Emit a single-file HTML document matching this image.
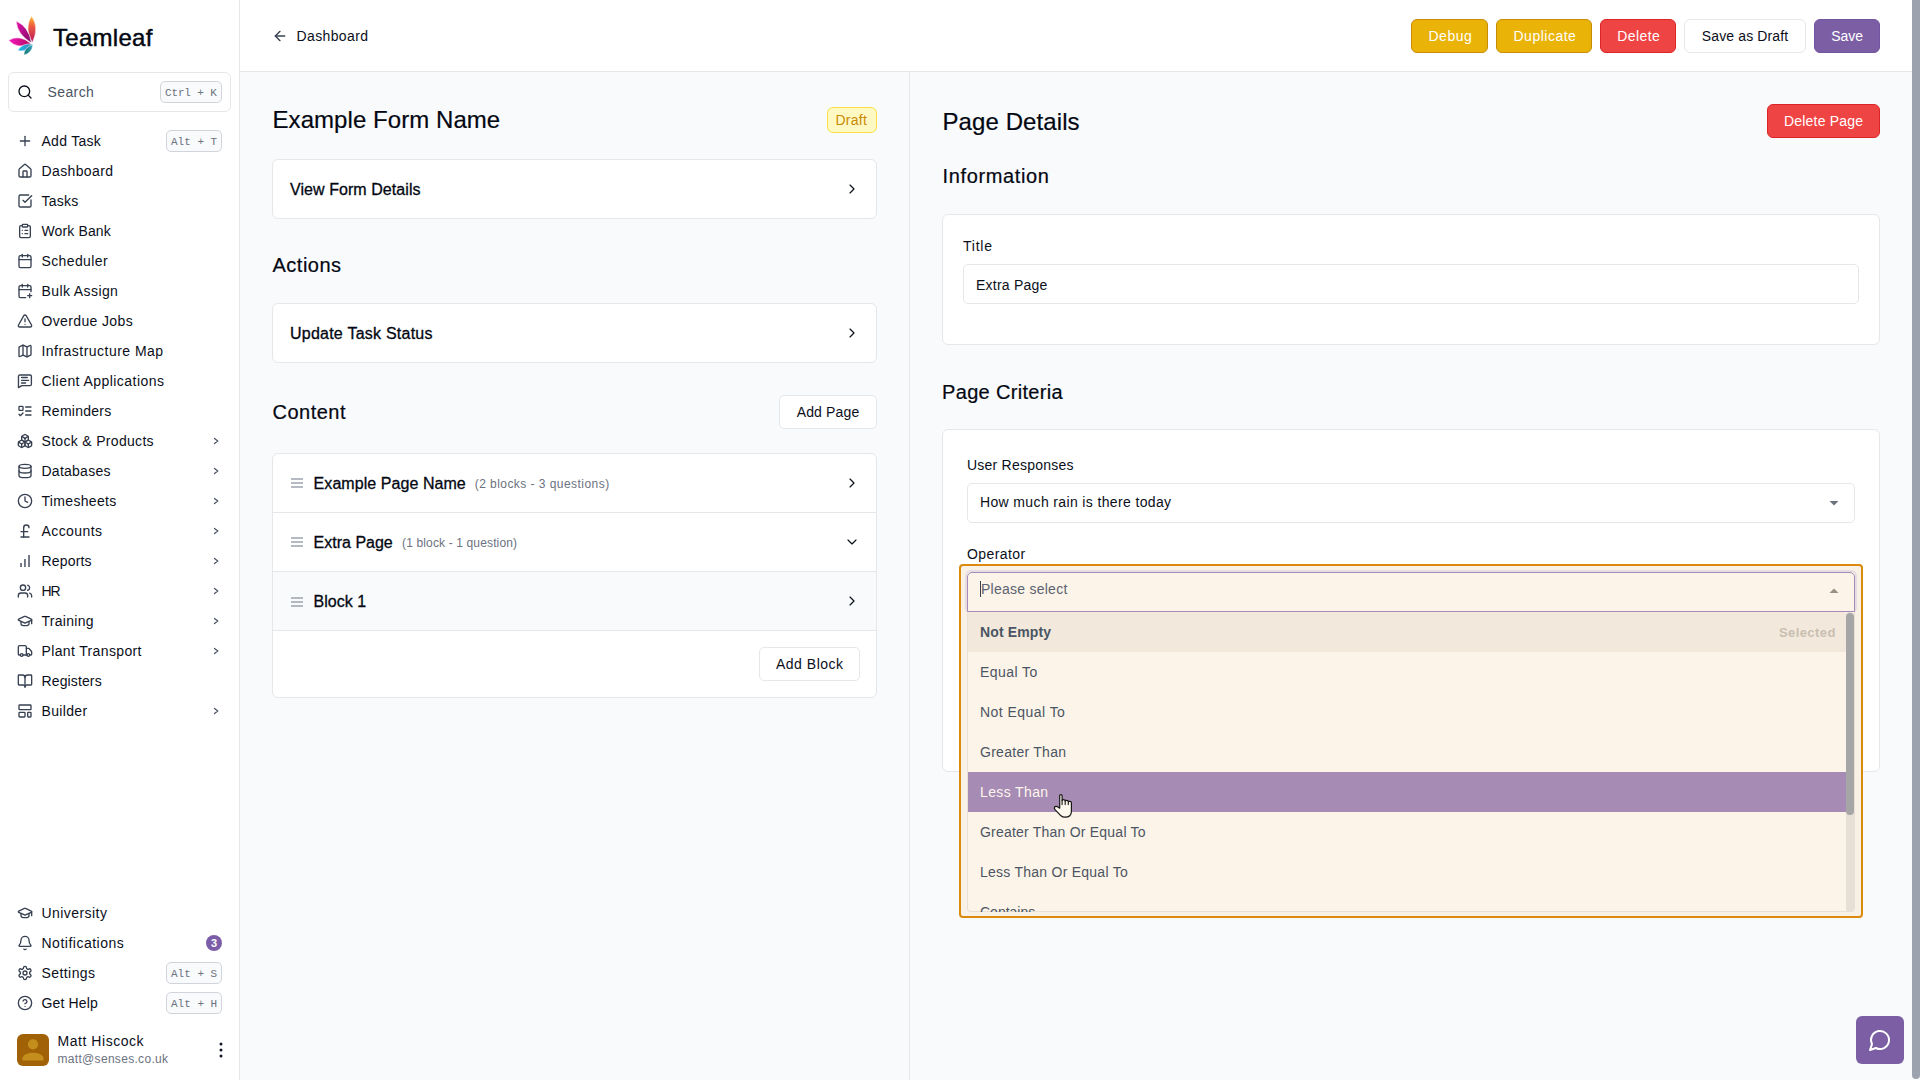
<!DOCTYPE html>
<html><head><meta charset="utf-8"><title>Teamleaf</title>
<style>
html,body{margin:0;padding:0;width:1920px;height:1080px;overflow:hidden;background:#f9fafb;}
body{position:relative;font-family:'Liberation Sans', sans-serif;-webkit-font-smoothing:antialiased;}
.t{position:absolute;white-space:nowrap;}
.b{position:absolute;}
.i{position:absolute;overflow:visible;}
</style></head><body>
<div class="b" style="left:0px;top:0px;width:1920px;height:1080px;background:#f9fafb;border-radius:0px;box-sizing:border-box;"></div>
<div class="b" style="left:0px;top:0px;width:240px;height:1080px;background:#ffffff;border-radius:0px;box-sizing:border-box;border-right:1px solid #e5e7eb;"></div>
<svg class="i" style="left:0px;top:0px" width="48" height="60" viewBox="0 0 48 60">
<defs>
<linearGradient id="g1" x1="0" y1="0" x2="0" y2="1"><stop offset="0" stop-color="#fcc02a"/><stop offset="0.35" stop-color="#f0603e"/><stop offset="1" stop-color="#b8125e"/></linearGradient>
<linearGradient id="g2" x1="0" y1="0" x2="1" y2="1"><stop offset="0" stop-color="#e512a8"/><stop offset="1" stop-color="#7c0c66"/></linearGradient>
<linearGradient id="g3" x1="0" y1="0" x2="1" y2="0"><stop offset="0" stop-color="#f516c0"/><stop offset="1" stop-color="#b30c5c"/></linearGradient>
<linearGradient id="g4" x1="0" y1="0" x2="1" y2="0"><stop offset="0" stop-color="#1cc0ec"/><stop offset="1" stop-color="#3b86b8"/></linearGradient>
<linearGradient id="g5" x1="0" y1="1" x2="1" y2="0"><stop offset="0" stop-color="#0e7470"/><stop offset="1" stop-color="#3aa6c4"/></linearGradient>
</defs>
<path d="M32.30 42.50Q39.66 27.69 31.50 16.00Q24.06 28.16 32.30 42.50Z" fill="url(#g1)" stroke="#fff" stroke-width="0.5"/>
<path d="M31.50 42.80Q28.81 26.79 16.20 21.00Q17.36 34.83 31.50 42.80Z" fill="url(#g2)" stroke="#fff" stroke-width="0.5"/>
<path d="M31.00 43.80Q19.95 33.92 8.60 40.20Q17.41 49.72 31.00 43.80Z" fill="url(#g3)" stroke="#fff" stroke-width="0.5"/>
<path d="M32.60 44.20Q22.30 42.44 17.80 50.40Q26.62 52.78 32.60 44.20Z" fill="url(#g4)" stroke="#fff" stroke-width="0.5"/>
<path d="M33.00 44.60Q24.21 46.93 23.80 54.90Q31.67 53.60 33.00 44.60Z" fill="url(#g5)" stroke="#fff" stroke-width="0.5"/>
</svg>
<div id="t1" class="t" style="left:53px;top:25.68px;font-size:24px;line-height:24px;color:#030712;font-weight:400;font-family:'Liberation Sans', sans-serif;letter-spacing:0.286px;-webkit-text-stroke:0.45px #030712;">Teamleaf</div>
<div class="b" style="left:8px;top:72px;width:223px;height:40px;background:#ffffff;border-radius:6px;box-sizing:border-box;border:1px solid #e5e7eb;"></div>
<svg class="i" style="left:17px;top:83.5px;" width="16" height="16" viewBox="0 0 24 24" fill="none" stroke="#0b0f1a" stroke-width="2" stroke-linecap="round" stroke-linejoin="round"><circle cx="11" cy="11" r="8"/><path d="m21 21-4.3-4.3"/></svg>
<div id="t2" class="t" style="left:47.5px;top:85.15px;font-size:14px;line-height:14px;color:#4b5563;font-weight:400;font-family:'Liberation Sans', sans-serif;letter-spacing:0.400px;">Search</div>
<div class="b" style="left:160px;top:81px;width:62px;height:22px;background:#f9fafb;border-radius:5px;box-sizing:border-box;border:1px solid #d1d5db;"></div>
<div id="t3" class="t" style="left:165px;top:87.57px;font-size:11px;line-height:11px;color:#6b7280;font-weight:400;font-family:'Liberation Mono', monospace;letter-spacing:-0.143px;">Ctrl + K</div>
<svg class="i" style="left:17px;top:133px;" width="16" height="16" viewBox="0 0 24 24" fill="none" stroke="#374151" stroke-width="2" stroke-linecap="round" stroke-linejoin="round"><path d="M5 12h14"/><path d="M12 5v14"/></svg>
<div id="t4" class="t" style="left:41.5px;top:134.15px;font-size:14px;line-height:14px;color:#0b0f1a;font-weight:400;font-family:'Liberation Sans', sans-serif;letter-spacing:0.286px;">Add Task</div>
<div class="b" style="left:166px;top:130px;width:56px;height:22px;background:#f9fafb;border-radius:5px;box-sizing:border-box;border:1px solid #d1d5db;"></div>
<div id="t5" class="t" style="left:171px;top:136.57px;font-size:11px;line-height:11px;color:#6b7280;font-weight:400;font-family:'Liberation Mono', monospace;">Alt + T</div>
<svg class="i" style="left:17px;top:163px;" width="16" height="16" viewBox="0 0 24 24" fill="none" stroke="#374151" stroke-width="2" stroke-linecap="round" stroke-linejoin="round"><path d="M15 21v-8a1 1 0 0 0-1-1h-4a1 1 0 0 0-1 1v8"/><path d="M3 10a2 2 0 0 1 .709-1.528l7-5.999a2 2 0 0 1 2.582 0l7 5.999A2 2 0 0 1 21 10v9a2 2 0 0 1-2 2H5a2 2 0 0 1-2-2z"/></svg>
<div id="t6" class="t" style="left:41.5px;top:164.15px;font-size:14px;line-height:14px;color:#0b0f1a;font-weight:400;font-family:'Liberation Sans', sans-serif;letter-spacing:0.374px;">Dashboard</div>
<svg class="i" style="left:17px;top:193px;" width="16" height="16" viewBox="0 0 24 24" fill="none" stroke="#374151" stroke-width="2" stroke-linecap="round" stroke-linejoin="round"><path d="M21 10.5V19a2 2 0 0 1-2 2H5a2 2 0 0 1-2-2V5a2 2 0 0 1 2-2h12.5"/><path d="m9 11 3 3L22 4"/></svg>
<div id="t7" class="t" style="left:41.5px;top:194.15px;font-size:14px;line-height:14px;color:#0b0f1a;font-weight:400;font-family:'Liberation Sans', sans-serif;letter-spacing:0.250px;">Tasks</div>
<svg class="i" style="left:17px;top:223px;" width="16" height="16" viewBox="0 0 24 24" fill="none" stroke="#374151" stroke-width="2" stroke-linecap="round" stroke-linejoin="round"><rect width="8" height="4" x="8" y="2" rx="1" ry="1"/><path d="M16 4h2a2 2 0 0 1 2 2v14a2 2 0 0 1-2 2H6a2 2 0 0 1-2-2V6a2 2 0 0 1 2-2h2"/><path d="M12 11h4"/><path d="M12 16h4"/><path d="M8 11h.01"/><path d="M8 16h.01"/></svg>
<div id="t8" class="t" style="left:41.5px;top:224.15px;font-size:14px;line-height:14px;color:#0b0f1a;font-weight:400;font-family:'Liberation Sans', sans-serif;letter-spacing:0.126px;">Work Bank</div>
<svg class="i" style="left:17px;top:253px;" width="16" height="16" viewBox="0 0 24 24" fill="none" stroke="#374151" stroke-width="2" stroke-linecap="round" stroke-linejoin="round"><rect width="18" height="18" x="3" y="4" rx="2"/><path d="M16 2v4"/><path d="M8 2v4"/><path d="M3 10h18"/></svg>
<div id="t9" class="t" style="left:41.5px;top:254.15px;font-size:14px;line-height:14px;color:#0b0f1a;font-weight:400;font-family:'Liberation Sans', sans-serif;letter-spacing:0.375px;">Scheduler</div>
<svg class="i" style="left:17px;top:283px;" width="16" height="16" viewBox="0 0 24 24" fill="none" stroke="#374151" stroke-width="2" stroke-linecap="round" stroke-linejoin="round"><path d="M8 2v4"/><path d="M16 2v4"/><path d="M21 13V6a2 2 0 0 0-2-2H5a2 2 0 0 0-2 2v14a2 2 0 0 0 2 2h8"/><path d="M3 10h18"/><path d="M16 19h6"/><path d="M19 16v6"/></svg>
<div id="t10" class="t" style="left:41.5px;top:284.15px;font-size:14px;line-height:14px;color:#0b0f1a;font-weight:400;font-family:'Liberation Sans', sans-serif;letter-spacing:0.400px;">Bulk Assign</div>
<svg class="i" style="left:17px;top:313px;" width="16" height="16" viewBox="0 0 24 24" fill="none" stroke="#374151" stroke-width="2" stroke-linecap="round" stroke-linejoin="round"><path d="m21.73 18-8-14a2 2 0 0 0-3.48 0l-8 14A2 2 0 0 0 4 21h16a2 2 0 0 0 1.73-3"/><path d="M12 9v4"/><path d="M12 17h.01"/></svg>
<div id="t11" class="t" style="left:41.5px;top:314.15px;font-size:14px;line-height:14px;color:#0b0f1a;font-weight:400;font-family:'Liberation Sans', sans-serif;letter-spacing:0.364px;">Overdue Jobs</div>
<svg class="i" style="left:17px;top:343px;" width="16" height="16" viewBox="0 0 24 24" fill="none" stroke="#374151" stroke-width="2" stroke-linecap="round" stroke-linejoin="round"><path d="M14.106 5.553a2 2 0 0 0 1.788 0l3.659-1.83A1 1 0 0 1 21 4.619v12.764a1 1 0 0 1-.553.894l-4.553 2.277a2 2 0 0 1-1.788 0l-4.212-2.106a2 2 0 0 0-1.788 0l-3.659 1.83A1 1 0 0 1 3 19.381V6.618a1 1 0 0 1 .553-.894l4.553-2.277a2 2 0 0 1 1.788 0z"/><path d="M15 5.764v15"/><path d="M9 3.236v15"/></svg>
<div id="t12" class="t" style="left:41.5px;top:344.15px;font-size:14px;line-height:14px;color:#0b0f1a;font-weight:400;font-family:'Liberation Sans', sans-serif;letter-spacing:0.471px;">Infrastructure Map</div>
<svg class="i" style="left:17px;top:373px;" width="16" height="16" viewBox="0 0 24 24" fill="none" stroke="#374151" stroke-width="2" stroke-linecap="round" stroke-linejoin="round"><path d="M21.6 17a2 2 0 0 1-2 2H7.2l-5 3V5a2 2 0 0 1 2-2h15.4a2 2 0 0 1 2 2z"/><path d="M6.8 6.8h8.6"/><path d="M6.8 11h10.6"/><path d="M6.8 15h6"/></svg>
<div id="t13" class="t" style="left:41.5px;top:374.15px;font-size:14px;line-height:14px;color:#0b0f1a;font-weight:400;font-family:'Liberation Sans', sans-serif;letter-spacing:0.444px;">Client Applications</div>
<svg class="i" style="left:17px;top:403px;" width="16" height="16" viewBox="0 0 24 24" fill="none" stroke="#374151" stroke-width="2" stroke-linecap="round" stroke-linejoin="round"><rect x="3" y="5" width="6" height="6" rx="1"/><path d="m3 17 2 2 4-4"/><path d="M13 6h8"/><path d="M13 12h8"/><path d="M13 18h8"/></svg>
<div id="t14" class="t" style="left:41.5px;top:404.15px;font-size:14px;line-height:14px;color:#0b0f1a;font-weight:400;font-family:'Liberation Sans', sans-serif;letter-spacing:0.250px;">Reminders</div>
<svg class="i" style="left:17px;top:433px;" width="16" height="16" viewBox="0 0 24 24" fill="none" stroke="#374151" stroke-width="2" stroke-linecap="round" stroke-linejoin="round"><path d="M2.97 12.92A2 2 0 0 0 2 14.63v3.24a2 2 0 0 0 .97 1.71l3 1.8a2 2 0 0 0 2.06 0L12 19v-5.5l-5-3-4.03 2.42Z"/><path d="m7 16.5-4.74-2.85"/><path d="m7 16.5 5-3"/><path d="M7 16.5v5.17"/><path d="M12 13.5V19l3.97 2.38a2 2 0 0 0 2.06 0l3-1.8a2 2 0 0 0 .97-1.71v-3.24a2 2 0 0 0-.97-1.71L17 10.5l-5 3Z"/><path d="m17 16.5-5-3"/><path d="m17 16.5 4.74-2.85"/><path d="M17 16.5v5.17"/><path d="M7.97 4.42A2 2 0 0 0 7 6.13v4.37l5 3 5-3V6.13a2 2 0 0 0-.97-1.71l-3-1.8a2 2 0 0 0-2.06 0l-3 1.8Z"/><path d="M12 8 7.26 5.15"/><path d="m12 8 4.74-2.85"/><path d="M12 13.5V8"/></svg>
<div id="t15" class="t" style="left:41.5px;top:434.15px;font-size:14px;line-height:14px;color:#0b0f1a;font-weight:400;font-family:'Liberation Sans', sans-serif;letter-spacing:0.315px;">Stock &amp; Products</div>
<svg class="i" style="left:210px;top:435px" width="12" height="12" viewBox="0 0 12 12"><path d="M4.5 3.4L7.8 6L4.5 8.6" fill="none" stroke="#4b5563" stroke-width="1.3" stroke-linecap="round" stroke-linejoin="round"/></svg>
<svg class="i" style="left:17px;top:463px;" width="16" height="16" viewBox="0 0 24 24" fill="none" stroke="#374151" stroke-width="2" stroke-linecap="round" stroke-linejoin="round"><ellipse cx="12" cy="5" rx="9" ry="3"/><path d="M3 5V19A9 3 0 0 0 21 19V5"/><path d="M3 12A9 3 0 0 0 21 12"/></svg>
<div id="t16" class="t" style="left:41.5px;top:464.15px;font-size:14px;line-height:14px;color:#0b0f1a;font-weight:400;font-family:'Liberation Sans', sans-serif;letter-spacing:0.250px;">Databases</div>
<svg class="i" style="left:210px;top:465px" width="12" height="12" viewBox="0 0 12 12"><path d="M4.5 3.4L7.8 6L4.5 8.6" fill="none" stroke="#4b5563" stroke-width="1.3" stroke-linecap="round" stroke-linejoin="round"/></svg>
<svg class="i" style="left:17px;top:493px;" width="16" height="16" viewBox="0 0 24 24" fill="none" stroke="#374151" stroke-width="2" stroke-linecap="round" stroke-linejoin="round"><circle cx="12" cy="12" r="10"/><polyline points="12 6 12 12 16 14"/></svg>
<div id="t17" class="t" style="left:41.5px;top:494.15px;font-size:14px;line-height:14px;color:#0b0f1a;font-weight:400;font-family:'Liberation Sans', sans-serif;letter-spacing:0.333px;">Timesheets</div>
<svg class="i" style="left:210px;top:495px" width="12" height="12" viewBox="0 0 12 12"><path d="M4.5 3.4L7.8 6L4.5 8.6" fill="none" stroke="#4b5563" stroke-width="1.3" stroke-linecap="round" stroke-linejoin="round"/></svg>
<svg class="i" style="left:17px;top:523px;" width="16" height="16" viewBox="0 0 24 24" fill="none" stroke="#374151" stroke-width="2" stroke-linecap="round" stroke-linejoin="round"><path d="M18 7c0-5.333-8-5.333-8 0"/><path d="M10 7v14"/><path d="M6 21h12"/><path d="M6 13h10"/></svg>
<div id="t18" class="t" style="left:41.5px;top:524.15px;font-size:14px;line-height:14px;color:#0b0f1a;font-weight:400;font-family:'Liberation Sans', sans-serif;letter-spacing:0.429px;">Accounts</div>
<svg class="i" style="left:210px;top:525px" width="12" height="12" viewBox="0 0 12 12"><path d="M4.5 3.4L7.8 6L4.5 8.6" fill="none" stroke="#4b5563" stroke-width="1.3" stroke-linecap="round" stroke-linejoin="round"/></svg>
<svg class="i" style="left:17px;top:553px" width="16" height="16" viewBox="0 0 16 16"><rect x="3.1" y="10" width="1.85" height="4" fill="#6b7280"/><rect x="7" y="6" width="1.85" height="8" fill="#6b7280"/><rect x="11.1" y="2" width="1.85" height="12" fill="#6b7280"/></svg>
<div id="t19" class="t" style="left:41.5px;top:554.15px;font-size:14px;line-height:14px;color:#0b0f1a;font-weight:400;font-family:'Liberation Sans', sans-serif;letter-spacing:0.167px;">Reports</div>
<svg class="i" style="left:210px;top:555px" width="12" height="12" viewBox="0 0 12 12"><path d="M4.5 3.4L7.8 6L4.5 8.6" fill="none" stroke="#4b5563" stroke-width="1.3" stroke-linecap="round" stroke-linejoin="round"/></svg>
<svg class="i" style="left:17px;top:583px;" width="16" height="16" viewBox="0 0 24 24" fill="none" stroke="#374151" stroke-width="2" stroke-linecap="round" stroke-linejoin="round"><path d="M16 21v-2a4 4 0 0 0-4-4H6a4 4 0 0 0-4 4v2"/><circle cx="9" cy="7" r="4"/><path d="M22 21v-2a4 4 0 0 0-3-3.87"/><path d="M16 3.13a4 4 0 0 1 0 7.75"/></svg>
<div id="t20" class="t" style="left:41.5px;top:584.15px;font-size:14px;line-height:14px;color:#0b0f1a;font-weight:400;font-family:'Liberation Sans', sans-serif;letter-spacing:-1.000px;">HR</div>
<svg class="i" style="left:210px;top:585px" width="12" height="12" viewBox="0 0 12 12"><path d="M4.5 3.4L7.8 6L4.5 8.6" fill="none" stroke="#4b5563" stroke-width="1.3" stroke-linecap="round" stroke-linejoin="round"/></svg>
<svg class="i" style="left:17px;top:613px;" width="16" height="16" viewBox="0 0 24 24" fill="none" stroke="#374151" stroke-width="2" stroke-linecap="round" stroke-linejoin="round"><path d="M21.42 10.922a1 1 0 0 0-.019-1.838L12.83 5.18a2 2 0 0 0-1.66 0L2.6 9.08a1 1 0 0 0 0 1.832l8.57 3.908a2 2 0 0 0 1.66 0z"/><path d="M22 10v6"/><path d="M6 12.5V16a6 3 0 0 0 12 0v-3.5"/></svg>
<div id="t21" class="t" style="left:41.5px;top:614.15px;font-size:14px;line-height:14px;color:#0b0f1a;font-weight:400;font-family:'Liberation Sans', sans-serif;letter-spacing:0.286px;">Training</div>
<svg class="i" style="left:210px;top:615px" width="12" height="12" viewBox="0 0 12 12"><path d="M4.5 3.4L7.8 6L4.5 8.6" fill="none" stroke="#4b5563" stroke-width="1.3" stroke-linecap="round" stroke-linejoin="round"/></svg>
<svg class="i" style="left:17px;top:643px;" width="16" height="16" viewBox="0 0 24 24" fill="none" stroke="#374151" stroke-width="2" stroke-linecap="round" stroke-linejoin="round"><path d="M14 18V6a2 2 0 0 0-2-2H4a2 2 0 0 0-2 2v11a1 1 0 0 0 1 1h2"/><path d="M15 18H9"/><path d="M19 18h2a1 1 0 0 0 1-1v-3.65a1 1 0 0 0-.22-.624l-3.48-4.35A1 1 0 0 0 17.52 8H14"/><circle cx="17" cy="18" r="2"/><circle cx="7" cy="18" r="2"/></svg>
<div id="t22" class="t" style="left:41.5px;top:644.15px;font-size:14px;line-height:14px;color:#0b0f1a;font-weight:400;font-family:'Liberation Sans', sans-serif;letter-spacing:0.357px;">Plant Transport</div>
<svg class="i" style="left:210px;top:645px" width="12" height="12" viewBox="0 0 12 12"><path d="M4.5 3.4L7.8 6L4.5 8.6" fill="none" stroke="#4b5563" stroke-width="1.3" stroke-linecap="round" stroke-linejoin="round"/></svg>
<svg class="i" style="left:17px;top:673px;" width="16" height="16" viewBox="0 0 24 24" fill="none" stroke="#374151" stroke-width="2" stroke-linecap="round" stroke-linejoin="round"><path d="M12 7v14"/><path d="M3 18a1 1 0 0 1-1-1V4a1 1 0 0 1 1-1h5a4 4 0 0 1 4 4 4 4 0 0 1 4-4h5a1 1 0 0 1 1 1v13a1 1 0 0 1-1 1h-6a3 3 0 0 0-3 3 3 3 0 0 0-3-3z"/></svg>
<div id="t23" class="t" style="left:41.5px;top:674.15px;font-size:14px;line-height:14px;color:#0b0f1a;font-weight:400;font-family:'Liberation Sans', sans-serif;letter-spacing:0.125px;">Registers</div>
<svg class="i" style="left:17px;top:703px;" width="16" height="16" viewBox="0 0 24 24" fill="none" stroke="#374151" stroke-width="2" stroke-linecap="round" stroke-linejoin="round"><rect width="18" height="7" x="3" y="3" rx="1"/><rect width="9" height="7" x="3" y="14" rx="1"/><rect width="5" height="7" x="16" y="14" rx="1"/></svg>
<div id="t24" class="t" style="left:41.5px;top:704.15px;font-size:14px;line-height:14px;color:#0b0f1a;font-weight:400;font-family:'Liberation Sans', sans-serif;letter-spacing:0.333px;">Builder</div>
<svg class="i" style="left:210px;top:705px" width="12" height="12" viewBox="0 0 12 12"><path d="M4.5 3.4L7.8 6L4.5 8.6" fill="none" stroke="#4b5563" stroke-width="1.3" stroke-linecap="round" stroke-linejoin="round"/></svg>
<svg class="i" style="left:17px;top:905px;" width="16" height="16" viewBox="0 0 24 24" fill="none" stroke="#374151" stroke-width="2" stroke-linecap="round" stroke-linejoin="round"><path d="M21.42 10.922a1 1 0 0 0-.019-1.838L12.83 5.18a2 2 0 0 0-1.66 0L2.6 9.08a1 1 0 0 0 0 1.832l8.57 3.908a2 2 0 0 0 1.66 0z"/><path d="M22 10v6"/><path d="M6 12.5V16a6 3 0 0 0 12 0v-3.5"/></svg>
<div id="t25" class="t" style="left:41.5px;top:906.15px;font-size:14px;line-height:14px;color:#0b0f1a;font-weight:400;font-family:'Liberation Sans', sans-serif;letter-spacing:0.444px;">University</div>
<svg class="i" style="left:17px;top:935px;" width="16" height="16" viewBox="0 0 24 24" fill="none" stroke="#374151" stroke-width="2" stroke-linecap="round" stroke-linejoin="round"><path d="M10.268 21a2 2 0 0 0 3.464 0"/><path d="M3.262 15.326A1 1 0 0 0 4 17h16a1 1 0 0 0 .74-1.673C19.41 13.956 18 12.499 18 8A6 6 0 0 0 6 8c0 4.499-1.411 5.956-2.738 7.326"/></svg>
<div id="t26" class="t" style="left:41.5px;top:936.15px;font-size:14px;line-height:14px;color:#0b0f1a;font-weight:400;font-family:'Liberation Sans', sans-serif;letter-spacing:0.500px;">Notifications</div>
<div class="b" style="left:206px;top:935px;width:16px;height:16px;background:#7c5ea8;border-radius:8px;box-sizing:border-box;"></div>
<div id="t27" class="t" style="left:214px;top:938.19px;font-size:11px;line-height:11px;color:#ffffff;font-weight:700;font-family:'Liberation Sans', sans-serif;width:16px;margin-left:-8px;text-align:center;">3</div>
<svg class="i" style="left:17px;top:965px;" width="16" height="16" viewBox="0 0 24 24" fill="none" stroke="#374151" stroke-width="2" stroke-linecap="round" stroke-linejoin="round"><path d="M12.22 2h-.44a2 2 0 0 0-2 2v.18a2 2 0 0 1-1 1.73l-.43.25a2 2 0 0 1-2 0l-.15-.08a2 2 0 0 0-2.73.73l-.22.38a2 2 0 0 0 .73 2.73l.15.1a2 2 0 0 1 1 1.72v.51a2 2 0 0 1-1 1.74l-.15.09a2 2 0 0 0-.73 2.73l.22.38a2 2 0 0 0 2.73.73l.15-.08a2 2 0 0 1 2 0l.43.25a2 2 0 0 1 1 1.73V20a2 2 0 0 0 2 2h.44a2 2 0 0 0 2-2v-.18a2 2 0 0 1 1-1.73l.43-.25a2 2 0 0 1 2 0l.15.08a2 2 0 0 0 2.73-.73l.22-.39a2 2 0 0 0-.73-2.73l-.15-.08a2 2 0 0 1-1-1.74v-.5a2 2 0 0 1 1-1.74l.15-.09a2 2 0 0 0 .73-2.73l-.22-.38a2 2 0 0 0-2.73-.73l-.15.08a2 2 0 0 1-2 0l-.43-.25a2 2 0 0 1-1-1.73V4a2 2 0 0 0-2-2z"/><circle cx="12" cy="12" r="3"/></svg>
<div id="t28" class="t" style="left:41.5px;top:966.15px;font-size:14px;line-height:14px;color:#0b0f1a;font-weight:400;font-family:'Liberation Sans', sans-serif;letter-spacing:0.429px;">Settings</div>
<div class="b" style="left:166px;top:962px;width:56px;height:22px;background:#f9fafb;border-radius:5px;box-sizing:border-box;border:1px solid #d1d5db;"></div>
<div id="t29" class="t" style="left:171px;top:968.57px;font-size:11px;line-height:11px;color:#6b7280;font-weight:400;font-family:'Liberation Mono', monospace;">Alt + S</div>
<svg class="i" style="left:17px;top:995px;" width="16" height="16" viewBox="0 0 24 24" fill="none" stroke="#374151" stroke-width="2" stroke-linecap="round" stroke-linejoin="round"><circle cx="12" cy="12" r="10"/><path d="M9.09 9a3 3 0 0 1 5.83 1c0 2-3 3-3 3"/><path d="M12 17h.01"/></svg>
<div id="t30" class="t" style="left:41.5px;top:996.15px;font-size:14px;line-height:14px;color:#0b0f1a;font-weight:400;font-family:'Liberation Sans', sans-serif;letter-spacing:0.143px;">Get Help</div>
<div class="b" style="left:166px;top:992px;width:56px;height:22px;background:#f9fafb;border-radius:5px;box-sizing:border-box;border:1px solid #d1d5db;"></div>
<div id="t31" class="t" style="left:171px;top:998.57px;font-size:11px;line-height:11px;color:#6b7280;font-weight:400;font-family:'Liberation Mono', monospace;">Alt + H</div>
<div class="b" style="left:17px;top:1034px;width:32px;height:32px;background:#a16207;border-radius:6px;box-sizing:border-box;"></div>
<svg class="i" style="left:17px;top:1034px" width="32" height="32" viewBox="0 0 32 32">
<circle cx="16" cy="10.4" r="5.1" fill="#c48e1c"/><path d="M5.3 25.2 C5.3 21 10 18.8 16 18.8 C22 18.8 26.7 21 26.7 25.2 C26.7 26 26.1 26.6 25.3 26.6 L6.7 26.6 C5.9 26.6 5.3 26 5.3 25.2Z" fill="#c48e1c"/></svg>
<div id="t32" class="t" style="left:57.5px;top:1034.15px;font-size:14px;line-height:14px;color:#0b0f1a;font-weight:400;font-family:'Liberation Sans', sans-serif;letter-spacing:0.545px;">Matt Hiscock</div>
<div id="t33" class="t" style="left:57.5px;top:1052.84px;font-size:12px;line-height:12px;color:#6b7280;font-weight:400;font-family:'Liberation Sans', sans-serif;letter-spacing:0.312px;">matt@senses.co.uk</div>
<svg class="i" style="left:216px;top:1040px" width="10" height="20" viewBox="0 0 10 20"><circle cx="5" cy="4" r="1.5" fill="#111827"/><circle cx="5" cy="10" r="1.5" fill="#111827"/><circle cx="5" cy="16" r="1.5" fill="#111827"/></svg>
<div class="b" style="left:240px;top:0px;width:1680px;height:72px;background:#ffffff;border-radius:0px;box-sizing:border-box;border-bottom:1px solid #e5e7eb;"></div>
<svg class="i" style="left:272px;top:28px;" width="16" height="16" viewBox="0 0 24 24" fill="none" stroke="#374151" stroke-width="2" stroke-linecap="round" stroke-linejoin="round"><path d="m12 19-7-7 7-7"/><path d="M19 12H5"/></svg>
<div id="t34" class="t" style="left:296.5px;top:29.15px;font-size:14px;line-height:14px;color:#0b0f1a;font-weight:400;font-family:'Liberation Sans', sans-serif;letter-spacing:0.374px;">Dashboard</div>
<div class="b" style="left:1411px;top:19px;width:77px;height:34px;background:#eab308;border-radius:6px;box-sizing:border-box;border:1px solid #ca8a04;"></div>
<div id="t35" class="t" style="left:1428.5px;top:29.15px;font-size:14px;line-height:14px;color:#ffffff;font-weight:400;font-family:'Liberation Sans', sans-serif;letter-spacing:0.500px;">Debug</div>
<div class="b" style="left:1496px;top:19px;width:96px;height:34px;background:#eab308;border-radius:6px;box-sizing:border-box;border:1px solid #ca8a04;"></div>
<div id="t36" class="t" style="left:1513.5px;top:29.15px;font-size:14px;line-height:14px;color:#ffffff;font-weight:400;font-family:'Liberation Sans', sans-serif;letter-spacing:0.500px;">Duplicate</div>
<div class="b" style="left:1600px;top:19px;width:76px;height:34px;background:#ef4444;border-radius:6px;box-sizing:border-box;border:1px solid #dc2626;"></div>
<div id="t37" class="t" style="left:1617.25px;top:29.15px;font-size:14px;line-height:14px;color:#ffffff;font-weight:400;font-family:'Liberation Sans', sans-serif;letter-spacing:0.400px;">Delete</div>
<div class="b" style="left:1684px;top:19px;width:122px;height:34px;background:#ffffff;border-radius:6px;box-sizing:border-box;border:1px solid #e5e7eb;"></div>
<div id="t38" class="t" style="left:1701.8px;top:29.15px;font-size:14px;line-height:14px;color:#0b0f1a;font-weight:400;font-family:'Liberation Sans', sans-serif;letter-spacing:0.133px;">Save as Draft</div>
<div class="b" style="left:1814px;top:19px;width:66px;height:34px;background:#7b5ea3;border-radius:6px;box-sizing:border-box;border:1px solid #7255a0;"></div>
<div id="t39" class="t" style="left:1831.25px;top:29.15px;font-size:14px;line-height:14px;color:#ffffff;font-weight:400;font-family:'Liberation Sans', sans-serif;">Save</div>
<div class="b" style="left:909px;top:72px;width:1px;height:1008px;background:#e5e7eb;border-radius:0px;box-sizing:border-box;"></div>
<div id="t40" class="t" style="left:272.5px;top:107.68px;font-size:24px;line-height:24px;color:#030712;font-weight:400;font-family:'Liberation Sans', sans-serif;letter-spacing:0.062px;-webkit-text-stroke:0.2px #030712;">Example Form Name</div>
<div class="b" style="left:827px;top:107px;width:50px;height:26px;background:#fef9c3;border-radius:6px;box-sizing:border-box;border:1px solid #fde047;"></div>
<div id="t41" class="t" style="left:835.5px;top:112.65px;font-size:14px;line-height:14px;color:#ca8a04;font-weight:400;font-family:'Liberation Sans', sans-serif;letter-spacing:0.250px;">Draft</div>
<div class="b" style="left:272px;top:159px;width:605px;height:60px;background:#ffffff;border-radius:6px;box-sizing:border-box;border:1px solid #e5e7eb;"></div>
<div id="t42" class="t" style="left:290px;top:182.46px;font-size:16px;line-height:16px;color:#030712;font-weight:400;font-family:'Liberation Sans', sans-serif;letter-spacing:0.062px;-webkit-text-stroke:0.3px #030712;">View Form Details</div>
<svg class="i" style="left:844px;top:181.0px;" width="16" height="16" viewBox="0 0 24 24" fill="none" stroke="#0b0f1a" stroke-width="1.75" stroke-linecap="round" stroke-linejoin="round"><path d="m9 18 6-6-6-6"/></svg>
<div id="t43" class="t" style="left:272.5px;top:255.07px;font-size:20px;line-height:20px;color:#030712;font-weight:400;font-family:'Liberation Sans', sans-serif;letter-spacing:0.500px;-webkit-text-stroke:0.2px #030712;">Actions</div>
<div class="b" style="left:272px;top:303px;width:605px;height:60px;background:#ffffff;border-radius:6px;box-sizing:border-box;border:1px solid #e5e7eb;"></div>
<div id="t44" class="t" style="left:290px;top:326.46px;font-size:16px;line-height:16px;color:#030712;font-weight:400;font-family:'Liberation Sans', sans-serif;letter-spacing:0.235px;-webkit-text-stroke:0.3px #030712;">Update Task Status</div>
<svg class="i" style="left:844px;top:325.0px;" width="16" height="16" viewBox="0 0 24 24" fill="none" stroke="#0b0f1a" stroke-width="1.75" stroke-linecap="round" stroke-linejoin="round"><path d="m9 18 6-6-6-6"/></svg>
<div id="t45" class="t" style="left:272.5px;top:402.07px;font-size:20px;line-height:20px;color:#030712;font-weight:400;font-family:'Liberation Sans', sans-serif;letter-spacing:0.500px;-webkit-text-stroke:0.2px #030712;">Content</div>
<div class="b" style="left:779px;top:395px;width:98px;height:34px;background:#ffffff;border-radius:5px;box-sizing:border-box;border:1px solid #e5e7eb;"></div>
<div id="t46" class="t" style="left:796.7px;top:405.15px;font-size:14px;line-height:14px;color:#0b0f1a;font-weight:400;font-family:'Liberation Sans', sans-serif;letter-spacing:0.143px;">Add Page</div>
<div class="b" style="left:272px;top:453px;width:605px;height:245px;background:#ffffff;border-radius:6px;box-sizing:border-box;border:1px solid #e5e7eb;overflow:hidden;"></div>
<div class="b" style="left:273px;top:571px;width:603px;height:59px;background:#f9fafb;border-radius:0px;box-sizing:border-box;"></div>
<div class="b" style="left:273px;top:512px;width:603px;height:1px;background:#e5e7eb;border-radius:0px;box-sizing:border-box;"></div>
<div class="b" style="left:273px;top:571px;width:603px;height:1px;background:#e5e7eb;border-radius:0px;box-sizing:border-box;"></div>
<div class="b" style="left:273px;top:630px;width:603px;height:1px;background:#e5e7eb;border-radius:0px;box-sizing:border-box;"></div>
<svg class="i" style="left:290px;top:475px" width="14" height="16" viewBox="0 0 14 16" stroke="#9ca3af" stroke-width="1.6" fill="none"><path d="M1 4h12M1 8h12M1 12h12"/></svg>
<div id="t47" class="t" style="left:313.6px;top:476.46px;font-size:16px;line-height:16px;color:#030712;font-weight:400;font-family:'Liberation Sans', sans-serif;letter-spacing:0.062px;-webkit-text-stroke:0.3px #030712;">Example Page Name</div>
<div id="t48" class="t" style="left:474.7px;top:477.84px;font-size:12px;line-height:12px;color:#6b7280;font-weight:400;font-family:'Liberation Sans', sans-serif;letter-spacing:0.452px;">(2 blocks - 3 questions)</div>
<svg class="i" style="left:844px;top:475px;" width="16" height="16" viewBox="0 0 24 24" fill="none" stroke="#0b0f1a" stroke-width="1.75" stroke-linecap="round" stroke-linejoin="round"><path d="m9 18 6-6-6-6"/></svg>
<svg class="i" style="left:290px;top:534px" width="14" height="16" viewBox="0 0 14 16" stroke="#9ca3af" stroke-width="1.6" fill="none"><path d="M1 4h12M1 8h12M1 12h12"/></svg>
<div id="t49" class="t" style="left:313.6px;top:535.46px;font-size:16px;line-height:16px;color:#030712;font-weight:400;font-family:'Liberation Sans', sans-serif;-webkit-text-stroke:0.3px #030712;">Extra Page</div>
<div id="t50" class="t" style="left:402px;top:536.84px;font-size:12px;line-height:12px;color:#6b7280;font-weight:400;font-family:'Liberation Sans', sans-serif;letter-spacing:0.143px;">(1 block - 1 question)</div>
<svg class="i" style="left:844px;top:534px;" width="16" height="16" viewBox="0 0 24 24" fill="none" stroke="#0b0f1a" stroke-width="1.75" stroke-linecap="round" stroke-linejoin="round"><path d="m6 9 6 6 6-6"/></svg>
<svg class="i" style="left:290px;top:594px" width="14" height="16" viewBox="0 0 14 16" stroke="#9ca3af" stroke-width="1.6" fill="none"><path d="M1 4h12M1 8h12M1 12h12"/></svg>
<div id="t51" class="t" style="left:313.6px;top:594.46px;font-size:16px;line-height:16px;color:#030712;font-weight:400;font-family:'Liberation Sans', sans-serif;-webkit-text-stroke:0.3px #030712;">Block 1</div>
<svg class="i" style="left:844px;top:593px;" width="16" height="16" viewBox="0 0 24 24" fill="none" stroke="#0b0f1a" stroke-width="1.75" stroke-linecap="round" stroke-linejoin="round"><path d="m9 18 6-6-6-6"/></svg>
<div class="b" style="left:759px;top:647px;width:101px;height:34px;background:#ffffff;border-radius:5px;box-sizing:border-box;border:1px solid #e5e7eb;"></div>
<div id="t52" class="t" style="left:776px;top:657.15px;font-size:14px;line-height:14px;color:#0b0f1a;font-weight:400;font-family:'Liberation Sans', sans-serif;letter-spacing:0.500px;">Add Block</div>
<div id="t53" class="t" style="left:942.5px;top:109.68px;font-size:24px;line-height:24px;color:#030712;font-weight:400;font-family:'Liberation Sans', sans-serif;letter-spacing:0.091px;-webkit-text-stroke:0.2px #030712;">Page Details</div>
<div class="b" style="left:1767px;top:104px;width:113px;height:34px;background:#ef4444;border-radius:6px;box-sizing:border-box;border:1px solid #dc2626;"></div>
<div id="t54" class="t" style="left:1784px;top:114.15px;font-size:14px;line-height:14px;color:#ffffff;font-weight:400;font-family:'Liberation Sans', sans-serif;letter-spacing:0.200px;">Delete Page</div>
<div id="t55" class="t" style="left:942.5px;top:166.07px;font-size:20px;line-height:20px;color:#030712;font-weight:400;font-family:'Liberation Sans', sans-serif;letter-spacing:0.640px;-webkit-text-stroke:0.2px #030712;">Information</div>
<div class="b" style="left:942px;top:214px;width:938px;height:131px;background:#ffffff;border-radius:6px;box-sizing:border-box;border:1px solid #e5e7eb;"></div>
<div id="t56" class="t" style="left:963px;top:239.15px;font-size:14px;line-height:14px;color:#0b0f1a;font-weight:400;font-family:'Liberation Sans', sans-serif;letter-spacing:0.750px;">Title</div>
<div class="b" style="left:963px;top:264px;width:896px;height:40px;background:#ffffff;border-radius:5px;box-sizing:border-box;border:1px solid #e5e7eb;"></div>
<div id="t57" class="t" style="left:976px;top:278.15px;font-size:14px;line-height:14px;color:#0b0f1a;font-weight:400;font-family:'Liberation Sans', sans-serif;letter-spacing:0.222px;">Extra Page</div>
<div id="t58" class="t" style="left:942px;top:382.07px;font-size:20px;line-height:20px;color:#030712;font-weight:400;font-family:'Liberation Sans', sans-serif;letter-spacing:0.333px;-webkit-text-stroke:0.2px #030712;">Page Criteria</div>
<div class="b" style="left:942px;top:429px;width:938px;height:343px;background:#ffffff;border-radius:6px;box-sizing:border-box;border:1px solid #e5e7eb;"></div>
<div id="t59" class="t" style="left:967px;top:458.15px;font-size:14px;line-height:14px;color:#0b0f1a;font-weight:400;font-family:'Liberation Sans', sans-serif;letter-spacing:0.231px;">User Responses</div>
<div class="b" style="left:967px;top:483px;width:888px;height:40px;background:#ffffff;border-radius:5px;box-sizing:border-box;border:1px solid #e5e7eb;"></div>
<div id="t60" class="t" style="left:980px;top:495.15px;font-size:14px;line-height:14px;color:#0b0f1a;font-weight:400;font-family:'Liberation Sans', sans-serif;letter-spacing:0.363px;">How much rain is there today</div>
<svg class="i" style="left:1828px;top:499px" width="12" height="8" viewBox="0 0 12 8"><path d="M1.5 2h9L6 6.5z" fill="#6b7280"/></svg>
<div id="t61" class="t" style="left:967px;top:547.15px;font-size:14px;line-height:14px;color:#0b0f1a;font-weight:400;font-family:'Liberation Sans', sans-serif;letter-spacing:0.429px;">Operator</div>
<div class="b" style="left:959px;top:564px;width:904px;height:354px;background:#f9f1e5;border-radius:4px;box-sizing:border-box;border:2px solid #dc8a0c;"></div>
<div class="b" style="left:965px;top:570px;width:892px;height:44px;background:#fcf4e8;border-radius:6px;box-sizing:border-box;"></div>
<div class="b" style="left:965px;top:570px;width:892px;height:44px;background:transparent;border-radius:6px;box-sizing:border-box;border:2px solid #e6dde0;"></div>
<div class="b" style="left:967px;top:572px;width:888px;height:40px;background:#fcf4e8;border-radius:0px;box-sizing:border-box;border:1px solid #a68bba;border-radius:5px 5px 0 0;"></div>
<div class="b" style="left:980px;top:581px;width:1.3px;height:16px;background:#374151;border-radius:0px;box-sizing:border-box;"></div>
<div id="t62" class="t" style="left:981px;top:582.15px;font-size:14px;line-height:14px;color:#5b6371;font-weight:400;font-family:'Liberation Sans', sans-serif;letter-spacing:0.250px;">Please select</div>
<svg class="i" style="left:1828px;top:587px" width="12" height="8" viewBox="0 0 12 8"><path d="M1.5 6h9L6 1.5z" fill="#9a8f80"/></svg>
<div style="position:absolute;left:0;top:0;width:1920px;height:1080px;clip-path:inset(612px 65px 168px 967px)">
<div class="b" style="left:967px;top:612px;width:888px;height:300px;background:#fcf4e8;border-radius:0px;box-sizing:border-box;border-left:1px solid #e8e0d4;border-right:1px solid #e8e0d4;border-bottom:1px solid #e8e0d4;border-radius:0 0 4px 4px;"></div>
<div class="b" style="left:968px;top:612px;width:878px;height:40px;background:#f2e9dc;border-radius:0px;box-sizing:border-box;"></div>
<div id="t63" class="t" style="left:980px;top:625.15px;font-size:14px;line-height:14px;color:#4b5563;font-weight:700;font-family:'Liberation Sans', sans-serif;letter-spacing:0.125px;">Not Empty</div>
<div id="t64" class="t" style="left:1778.9px;top:626.00px;font-size:13px;line-height:13px;color:#c9bfb1;font-weight:700;font-family:'Liberation Sans', sans-serif;letter-spacing:0.429px;">Selected</div>
<div id="t65" class="t" style="left:980px;top:665.15px;font-size:14px;line-height:14px;color:#4b5563;font-weight:400;font-family:'Liberation Sans', sans-serif;letter-spacing:0.429px;">Equal To</div>
<div id="t66" class="t" style="left:980px;top:705.15px;font-size:14px;line-height:14px;color:#4b5563;font-weight:400;font-family:'Liberation Sans', sans-serif;letter-spacing:0.455px;">Not Equal To</div>
<div id="t67" class="t" style="left:980px;top:745.15px;font-size:14px;line-height:14px;color:#4b5563;font-weight:400;font-family:'Liberation Sans', sans-serif;letter-spacing:0.273px;">Greater Than</div>
<div class="b" style="left:968px;top:772px;width:878px;height:40px;background:#a68bb5;border-radius:0px;box-sizing:border-box;"></div>
<div id="t68" class="t" style="left:980px;top:785.15px;font-size:14px;line-height:14px;color:#fdf6ec;font-weight:400;font-family:'Liberation Sans', sans-serif;letter-spacing:0.375px;">Less Than</div>
<div id="t69" class="t" style="left:980px;top:825.15px;font-size:14px;line-height:14px;color:#4b5563;font-weight:400;font-family:'Liberation Sans', sans-serif;letter-spacing:0.217px;">Greater Than Or Equal To</div>
<div id="t70" class="t" style="left:980px;top:865.15px;font-size:14px;line-height:14px;color:#4b5563;font-weight:400;font-family:'Liberation Sans', sans-serif;letter-spacing:0.250px;">Less Than Or Equal To</div>
<div id="t71" class="t" style="left:980px;top:905.15px;font-size:14px;line-height:14px;color:#4b5563;font-weight:400;font-family:'Liberation Sans', sans-serif;">Contains</div>
<div class="b" style="left:1846px;top:612px;width:8px;height:300px;background:#e6e0d6;border-radius:4px;box-sizing:border-box;"></div>
<div class="b" style="left:1846px;top:613px;width:8px;height:202px;background:#a6a6a6;border-radius:4px;box-sizing:border-box;"></div>
</div>
<svg class="i" style="left:1053px;top:793px" width="20" height="26" viewBox="0 0 20 26">
<path d="M6.7 15.2L6.7 2.8Q6.7 1.6 7.9 1.6Q9.1 1.6 9.1 2.8L9.1 7.6Q9.1 6.6 10.65 6.6Q12.2 6.6 12.2 7.9Q12.2 7.3 13.75 7.3Q15.3 7.3 15.3 8.8Q15.3 8.3 16.85 8.3Q18.4 8.3 18.4 9.8L18.4 18.5Q18.4 24.2 12 24.2Q9.5 24.2 8.0 22.8L2.2 16.8Q0.8 15.3 1.6 14.0Q2.6 12.8 4.2 13.6L6.7 15.2Z" fill="#fdf8ee" stroke="#161616" stroke-width="1.2" stroke-linejoin="round"/>
<path d="M9.1 7.6V11.6M12.2 7.9V11.6M15.3 8.8V11.6" stroke="#161616" stroke-width="1.1" stroke-linecap="round" fill="none"/>
</svg>
<div class="b" style="left:1856px;top:1016px;width:48px;height:48px;background:#7b5ea3;border-radius:6px;box-sizing:border-box;"></div>
<svg class="i" style="left:1868px;top:1028px;" width="24" height="24" viewBox="0 0 24 24" fill="none" stroke="#ffffff" stroke-width="2" stroke-linecap="round" stroke-linejoin="round"><path d="M7.9 20A9 9 0 1 0 4 16.1L2 22Z"/></svg>
<div class="b" style="left:1912px;top:-3px;width:8px;height:1082px;background:#9ca3af;border-radius:4px;box-sizing:border-box;"></div>

</body></html>
